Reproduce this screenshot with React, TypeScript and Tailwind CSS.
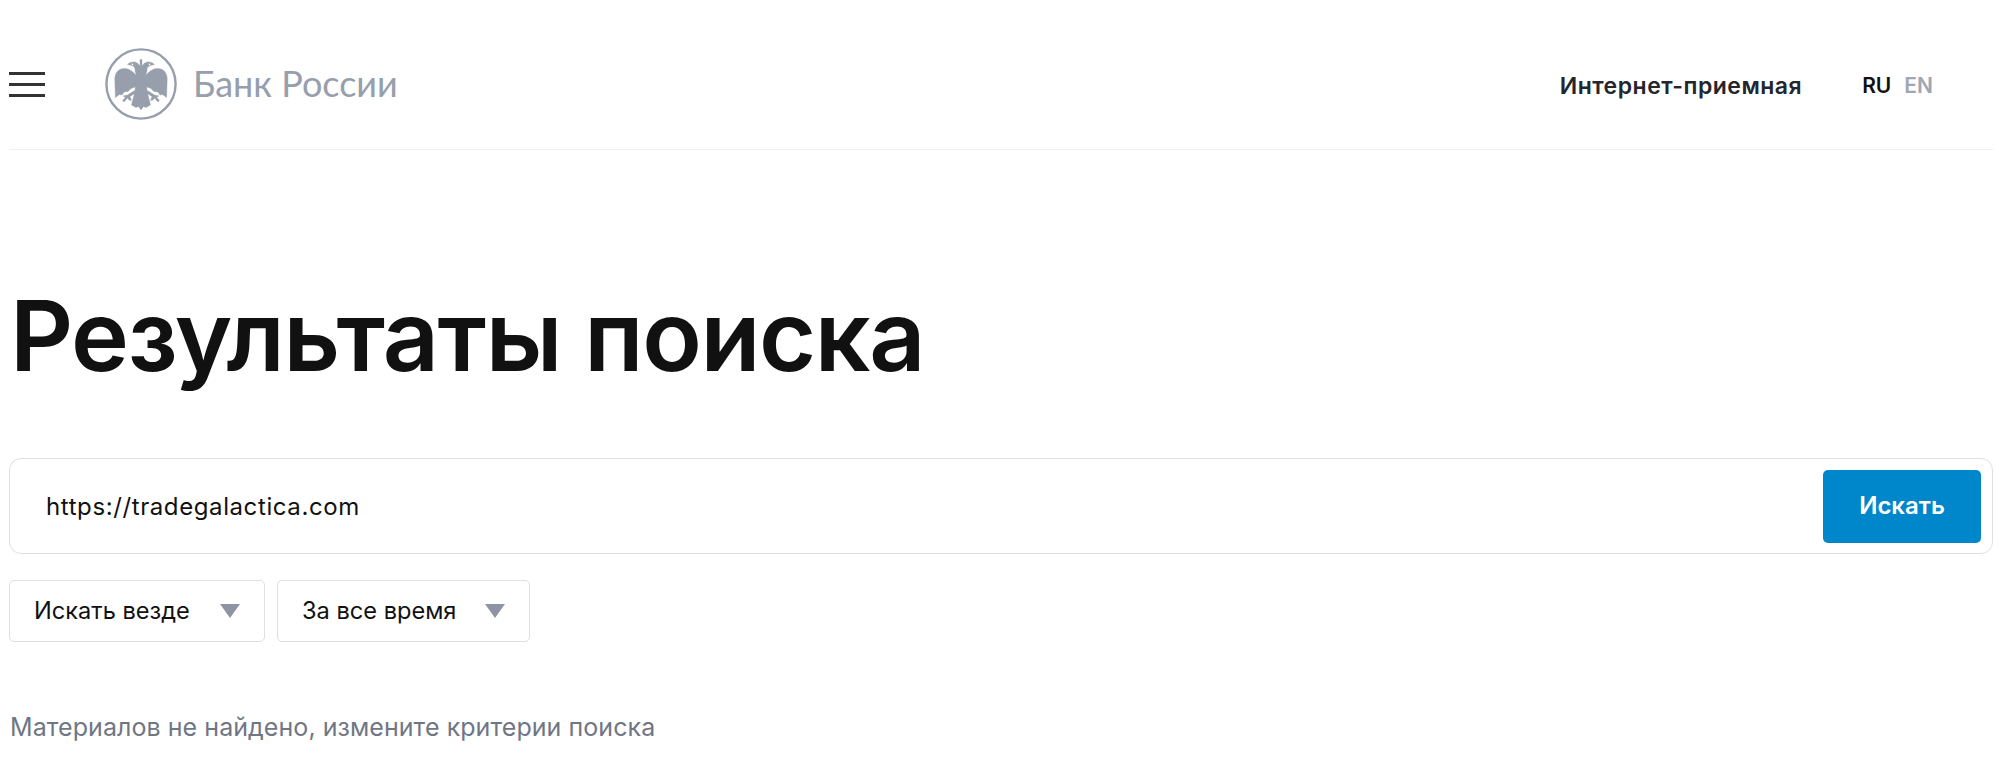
import React from 'react';

const Eagle: React.FC = () => (
  <svg viewBox="0 0 72 72" className="w-[72px] h-[72px] shrink-0">
    <circle cx="36" cy="36" r="34.6" fill="none" stroke="#979eac" strokeWidth="2.4" />
    <g fill="#979eac" stroke="#979eac" strokeWidth="0.4" strokeLinejoin="round">
      {/* heads */}
      <path d="M22.5 16.5 C25 13.5 30 13 33 15.5 L35 18 L35 11.5 L37 11.5 L37 18 L39 15.5 C42 13 47 13.5 49.5 16.5 L45 17.5 C42.5 18.5 41.5 21 42 23 L40.5 28 L31.5 28 L30 23 C30.5 21 29.5 18.5 27 17.5 Z" />
      {/* wings */}
      <path d="M32 28 C29 25.5 27 21.5 20.5 20.5 C13.5 20 9.8 25 9.8 31 L10.4 49.5 L14.5 46.5 L17 47 L19 44 L23 43.5 L26 40.5 L30 39 L32 37 Z" />
      <path d="M40 28 C43 25.5 45 21.5 51.5 20.5 C58.5 20 62.2 25 62.2 31 L61.6 49.5 L57.5 46.5 L55 47 L53 44 L49 43.5 L46 40.5 L42 39 L40 37 Z" />
      {/* body and tail */}
      <path d="M31 26 L41 26 L42 43 L43.5 49 L45.5 57 L41 59.5 L38.5 58.5 L36 62 L33.5 58.5 L31 59.5 L26.5 57 L28.5 49 L30 43 Z" />
      {/* legs */}
      <path d="M29.5 42.5 L30.5 45 L25 48.5 L26.5 52.5 L24 52 L22.5 50 L19 54 L17.6 52.5 L20.5 49 L18 48 L22.5 47 Z" />
      <path d="M42.5 42.5 L41.5 45 L47 48.5 L45.5 52.5 L48 52 L49.5 50 L53 54 L54.4 52.5 L51.5 49 L54 48 L49.5 47 Z" />
    </g>
    <g fill="#ffffff">
      <circle cx="27.5" cy="16.4" r="0.8" />
      <circle cx="44.5" cy="16.4" r="0.8" />
    </g>
  </svg>
);

const Caret: React.FC = () => (
  <svg viewBox="0 0 20 14" className="w-[20px] h-[14px] shrink-0">
    <path d="M0 0 H20 L10 14 Z" fill="#8e94a3" />
  </svg>
);

const FilterSelect: React.FC<{ label: string; width: string }> = ({ label, width }) => (
  <div className={`${width} h-[62px] flex items-center justify-between pl-[24px] pr-[24px] border border-[#dedfe3] rounded-[5px] bg-white`}>
    <span className="text-[23.6px] text-[#111111] leading-none">{label}</span>
    <Caret />
  </div>
);

export default function App() {
  return (
    <div className="w-[1999px] h-[769px] overflow-hidden bg-white pl-[9px] pr-[6px] font-['Inter',sans-serif]">
      <header className="h-[150px] pt-[48px] border-b border-[#f0f0f2] flex items-start">
        <button className="mt-[24px] w-[36px] flex flex-col gap-[8px]">
          <span className="block h-[3px] bg-[#333333]" />
          <span className="block h-[3px] bg-[#333333]" />
          <span className="block h-[3px] bg-[#333333]" />
        </button>
        <div className="ml-[60px] flex items-center gap-[16px]">
          <Eagle />
          <span className="font-['Lato',sans-serif] text-[36px] leading-none text-[#979eac] -mt-[3px]">Банк России</span>
        </div>
        <nav className="ml-auto mr-[60px] mt-[25px] flex items-center">
          <span className="text-[23px] leading-none font-semibold text-[#24262d] tracking-[0.5px] mt-[2px]">Интернет-приемная</span>
          <span className="ml-[60px] text-[21px] leading-none font-semibold text-[#111111]">RU</span>
          <span className="ml-[13px] text-[21px] leading-none font-semibold text-[#a0a6b2]">EN</span>
        </nav>
      </header>

      <h1 className="mt-[131px] ml-[1px] text-[98px] leading-[110px] font-semibold text-[#111111] tracking-[-1.4px]">Результаты поиска</h1>

      <div className="mt-[67px] h-[96px] flex items-center justify-between pl-[36px] pr-[11px] border border-[#dedfe3] rounded-[12px] bg-white">
        <span className="text-[24px] text-[#111111] leading-none tracking-[0.6px] mt-[1px]">https://tradegalactica.com</span>
        <button className="w-[158px] h-[73px] rounded-[5px] bg-[#0086cb] text-white text-[24px] font-semibold">Искать</button>
      </div>

      <div className="mt-[26px] flex gap-[12px]">
        <FilterSelect label="Искать везде" width="w-[256px]" />
        <FilterSelect label="За все время" width="w-[253px]" />
      </div>

      <p className="mt-[70px] ml-[1px] text-[25px] leading-[30px] text-[#6f7685] tracking-[0.06px]">Материалов не найдено, измените критерии поиска</p>
    </div>
  );
}
